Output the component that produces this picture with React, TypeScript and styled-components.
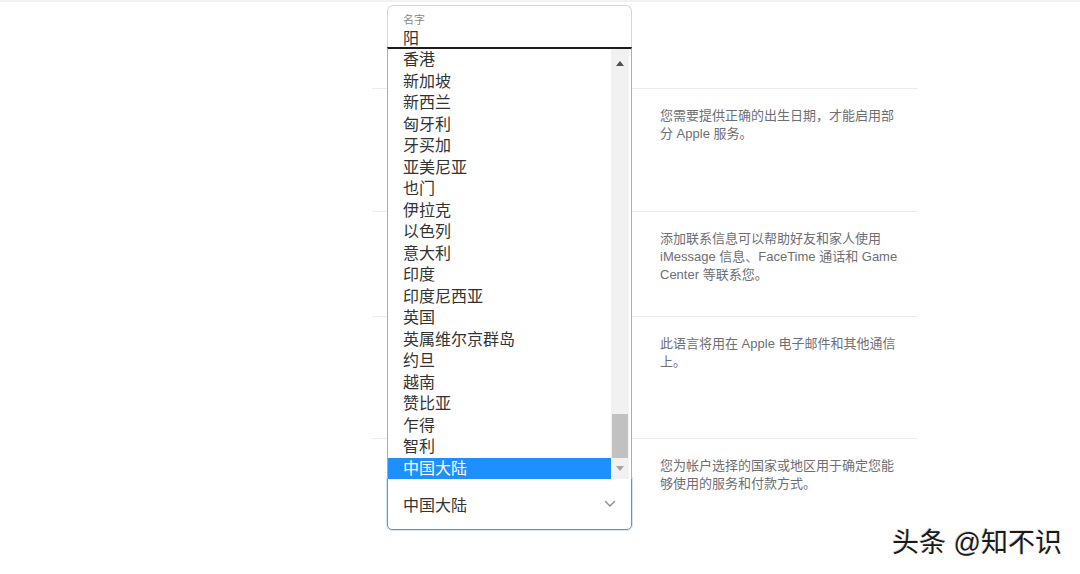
import React from "react";
import styled, { createGlobalStyle } from "styled-components";

const countries = [
	"香港", "新加坡", "新西兰", "匈牙利", "牙买加", "亚美尼亚", "也门", "伊拉克", "以色列", "意大利",
	"印度", "印度尼西亚", "英国", "英属维尔京群岛", "约旦", "越南", "赞比亚", "乍得", "智利", "中国大陆",
];

const selected = "中国大陆";

const rows = [
	{ height: 86, text: "" },
	{ height: 123, text: "您需要提供正确的出生日期，才能启用部分 Apple 服务。" },
	{ height: 105, text: "添加联系信息可以帮助好友和家人使用 iMessage 信息、FaceTime 通话和 Game Center 等联系您。" },
	{ height: 122, text: "此语言将用在 Apple 电子邮件和其他通信上。" },
	{ height: 136, text: "您为帐户选择的国家或地区用于确定您能够使用的服务和付款方式。" },
];

export default function App() {
	return (
		<>
			<GlobalStyle />
			<Page>
				<TopLine />
				<Form>
					{rows.map((row, i) => (
						<Row key={i} $height={row.height} $first={i === 0}>
							<FieldColumn>
								{i === 0 && (
									<NameField>
										<FieldLabel>名字</FieldLabel>
										<FieldValue>阳</FieldValue>
									</NameField>
								)}
								{i === rows.length - 1 && (
									<SelectBox>
										<SelectValue>{selected}</SelectValue>
										<svg width="12" height="8" viewBox="0 0 12 8" fill="none">
											<path d="M1.5 1.5 6 6l4.5-4.5" stroke="#8a8a8a" strokeWidth="1.4" strokeLinecap="round" strokeLinejoin="round" />
										</svg>
									</SelectBox>
								)}
							</FieldColumn>
							<Description>{row.text}</Description>
						</Row>
					))}

					<ListPopup>
						<OptionList>
							{countries.map((c) => (
								<Option key={c} $active={c === selected}>{c}</Option>
							))}
						</OptionList>
						<ScrollTrack>
							<ScrollArrow>
								<svg width="8" height="5" viewBox="0 0 8 5"><path d="M0 5 4 0l4 5z" fill="#505050" /></svg>
							</ScrollArrow>
							<ScrollSpacer />
							<ScrollThumb />
							<ScrollArrow $bottom>
								<svg width="8" height="5" viewBox="0 0 8 5"><path d="M0 0h8L4 5z" fill="#a3a3a3" /></svg>
							</ScrollArrow>
						</ScrollTrack>
					</ListPopup>
				</Form>
				<Watermark>头条 @知不识</Watermark>
			</Page>
		</>
	);
}

const GlobalStyle = createGlobalStyle`
	html, body {
		margin: 0;
		padding: 0;
		background: #fff;
	}
	body {
		font-family: "Liberation Sans", "Noto Sans CJK SC", sans-serif;
		color: #333;
	}
`;

const Page = styled.div`
	position: relative;
	width: 1080px;
	height: 574px;
	overflow: hidden;
	background: #fff;
`;

const TopLine = styled.div`
	height: 2px;
	background: #f2f2f2;
`;

const Form = styled.div`
	position: relative;
	margin-left: 372px;
	width: 546px;
`;

const Row = styled.div<{ $height: number; $first: boolean }>`
	display: grid;
	grid-template-columns: 288px 1fr;
	height: ${(p) => p.$height}px;
	box-sizing: border-box;
	border-top: ${(p) => (p.$first ? "none" : "1px solid #ececec")};
`;

const FieldColumn = styled.div`
	padding-left: 15px;
	display: flex;
	flex-direction: column;
`;

const Description = styled.p`
	margin: 0;
	padding: 18px 18px 0 0;
	font-size: 13px;
	line-height: 18px;
	color: #6e6e73;
`;

const NameField = styled.div`
	margin-top: 3px;
	width: 245px;
	height: 44px;
	box-sizing: border-box;
	border: 1px solid #d6d6d6;
	border-bottom: none;
	border-radius: 6px 6px 0 0;
	padding: 7px 15px 0;
	display: flex;
	flex-direction: column;
`;

const FieldLabel = styled.span`
	font-size: 11px;
	line-height: 14px;
	color: #888;
`;

const FieldValue = styled.span`
	margin-top: 2px;
	font-size: 16px;
	line-height: 20px;
	color: #333;
`;

const SelectBox = styled.div`
	margin-top: 39px;
	width: 245px;
	height: 52px;
	box-sizing: border-box;
	border: 1px solid #4c9be8;
	border-radius: 0 0 5px 5px;
	box-shadow: 0 0 0 1px rgba(76, 155, 232, 0.25);
	padding: 0 15px;
	display: flex;
	align-items: center;
	justify-content: space-between;
`;

const SelectValue = styled.span`
	font-size: 16px;
	color: #333;
`;

const ListPopup = styled.div`
	position: absolute;
	top: 45px;
	left: 15px;
	width: 245px;
	height: 432px;
	box-sizing: border-box;
	display: flex;
	background: #fff;
	border-top: 2px solid #1d1d1f;
	border-left: 1px solid #a7afbf;
	border-right: 1px solid #a7afbf;
`;

const OptionList = styled.div`
	flex: 1;
	display: flex;
	flex-direction: column;
`;

const Option = styled.div<{ $active: boolean }>`
	height: 21.5px;
	line-height: 21.5px;
	padding-left: 15px;
	font-size: 16px;
	color: ${(p) => (p.$active ? "#fff" : "#333")};
	background: ${(p) => (p.$active ? "#1e8fff" : "transparent")};
	white-space: nowrap;
`;

const ScrollTrack = styled.div`
	width: 18px;
	margin-right: 2px;
	background: #f1f1f1;
	display: flex;
	flex-direction: column;
`;

const ScrollArrow = styled.div<{ $bottom?: boolean }>`
	height: ${(p) => (p.$bottom ? 21 : 26)}px;
	display: flex;
	align-items: center;
	justify-content: center;
	padding-top: ${(p) => (p.$bottom ? 0 : 2)}px;
	box-sizing: border-box;
`;

const ScrollSpacer = styled.div`
	flex: 1;
`;

const ScrollThumb = styled.div`
	height: 44px;
	margin: 0 1px;
	background: #c1c1c1;
`;

const Watermark = styled.div`
	position: absolute;
	right: 18px;
	bottom: 14px;
	font-size: 27px;
	line-height: 34px;
	color: #1a1a1a;
	text-shadow: 1px 1px 0 #fff, -1px -1px 0 rgba(0, 0, 0, 0.15);
`;
